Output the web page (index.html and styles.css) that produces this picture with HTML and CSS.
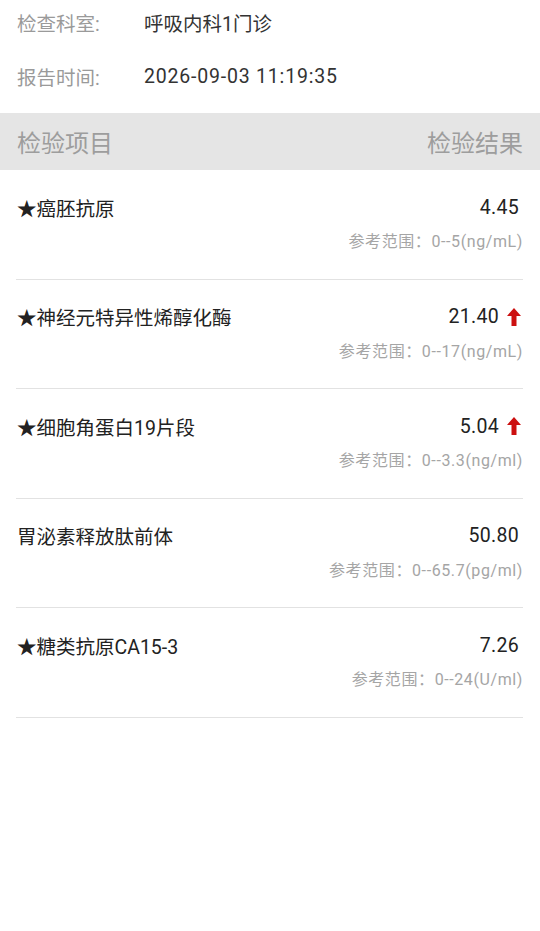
FILE: index.html
```html
<!DOCTYPE html>
<html lang="zh-CN">
<head>
<meta charset="utf-8">
<link rel="stylesheet" href="styles.css">
</head>
<body>
<div class="info">
  <div class="info-row"><span class="info-label">检查科室:</span><span class="info-value">呼吸内科1门诊</span></div>
  <div class="info-row"><span class="info-label">报告时间:</span><span class="info-value date">2026-09-03 11:19:35</span></div>
</div>
<div class="table-head"><span>检验项目</span><span>检验结果</span></div>
<div class="list">
  <div class="item">
    <div class="item-top"><span class="name">★癌胚抗原</span><span class="value">4.45</span></div>
    <div class="range">参考范围：0--5(ng/mL)</div>
  </div>
  <div class="item">
    <div class="item-top"><span class="name">★神经元特异性烯醇化酶</span><span class="value">21.40<svg class="up" viewBox="0 0 14 18" width="14" height="18"><path d="M7 0 L14 8 L9.5 8 L9.5 18 L4.5 18 L4.5 8 L0 8 Z" fill="#cc1010"/></svg></span></div>
    <div class="range">参考范围：0--17(ng/mL)</div>
  </div>
  <div class="item">
    <div class="item-top"><span class="name">★细胞角蛋白19片段</span><span class="value">5.04<svg class="up" viewBox="0 0 14 18" width="14" height="18"><path d="M7 0 L14 8 L9.5 8 L9.5 18 L4.5 18 L4.5 8 L0 8 Z" fill="#cc1010"/></svg></span></div>
    <div class="range">参考范围：0--3.3(ng/ml)</div>
  </div>
  <div class="item">
    <div class="item-top"><span class="name">胃泌素释放肽前体</span><span class="value">50.80</span></div>
    <div class="range">参考范围：0--65.7(pg/ml)</div>
  </div>
  <div class="item">
    <div class="item-top"><span class="name">★糖类抗原CA15-3</span><span class="value">7.26</span></div>
    <div class="range">参考范围：0--24(U/ml)</div>
  </div>
</div>
</body>
</html>
```
FILE: styles.css
```css
* { box-sizing: border-box; }
html, body { margin: 0; padding: 0; background: #fff; }
body {
  width: 540px;
  font-family: Roboto, "Noto Sans CJK SC", sans-serif;
  color: #222;
}
.info { padding: 0 17px; }
.info-row {
  display: flex;
  align-items: center;
  height: 54px;
  font-size: 19.5px;
}
.info-row:first-child { margin-top: -5px; }
.info-label { width: 127px; color: #9a9a9a; }
.info-value { color: #333; }
.date { letter-spacing: 0.8px; }
.table-head {
  margin-top: 10px;
  height: 57px;
  background: #e5e5e5;
  display: flex;
  justify-content: space-between;
  align-items: center;
  padding: 0 17px;
  font-size: 24px;
  color: #9d9d9d;
}
.list { margin: 0 17px 0 16px; }
.item {
  padding: 26px 0 26.5px 1px;
  border-bottom: 1px solid #e2e2e2;
}
.item-top {
  display: flex;
  justify-content: space-between;
  align-items: center;
  height: 22px;
  font-size: 19.5px;
  color: #222;
}
.value { display: flex; align-items: center; padding-right: 4px; letter-spacing: 0.3px; }
.up { margin-left: 8px; margin-right: -2px; }
.range {
  margin-top: 14px;
  line-height: 20px;
  text-align: right;
  font-size: 16px;
  letter-spacing: 0.6px;
  color: #a5a5a5;
}
```
